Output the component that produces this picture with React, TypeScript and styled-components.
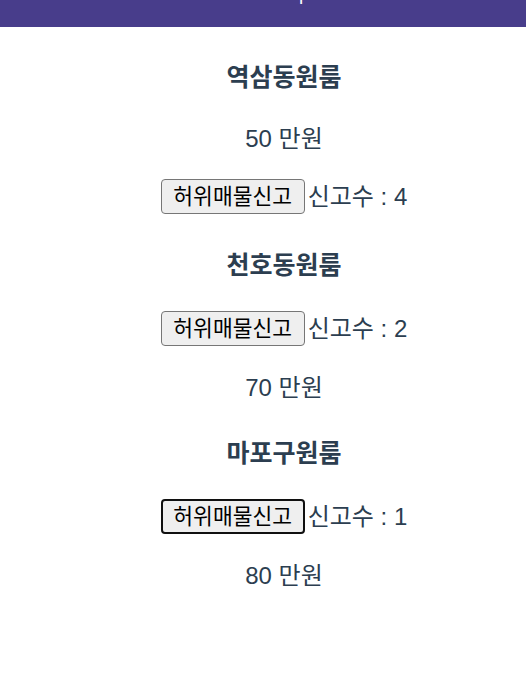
import React, { FC } from 'react';
import styled, { createGlobalStyle } from 'styled-components';

const GlobalStyle = createGlobalStyle`
    html, body {
        margin: 0;
        padding: 0;
        background: #ffffff;
    }
    body {
        font-family: 'Liberation Sans', Arial, 'Noto Sans CJK KR', sans-serif;
        -webkit-font-smoothing: antialiased;
        color: #2c3e50;
    }
`;

const Page = styled.div`
    display: flex;
    flex-direction: column;
`;

const Menu = styled.div`
    height: 27px;
    background: #483d8b;
    overflow: hidden;
    display: flex;
    justify-content: center;
    padding-left: 76px;
`;

const MenuText = styled.span`
    color: #ffffff;
    font-size: 20px;
    line-height: 20px;
    margin-top: -17px;
    height: 20px;
`;

const Content = styled.div`
    padding: 2px 0 0 42px;
    text-align: center;
`;

const Title = styled.h4<{ first?: boolean }>`
    font-size: 25px;
    font-weight: 700;
    line-height: 32px;
    margin: ${(props) => (props.first ? '32px' : '33px')} 0 30px;
`;

const Price = styled.p`
    font-size: 24px;
    line-height: 32px;
    margin: 24px 0;
`;

const ReportRow = styled.p`
    font-size: 24px;
    line-height: 37px;
    height: 37px;
    margin: 24px 0;
    display: flex;
    justify-content: center;
    align-items: flex-start;
`;

const ReportButton = styled.button<{ focused?: boolean }>`
    font-family: 'Liberation Sans', Arial, 'Noto Sans CJK KR', sans-serif;
    font-size: 21.5px;
    line-height: 26px;
    height: 35px;
    width: 144px;
    padding: 0 4px;
    color: #000000;
    background: #efefef;
    border: ${(props) => (props.focused ? '2px solid #101010' : '1px solid #767676')};
    border-radius: 4px;
    box-sizing: border-box;
    cursor: pointer;
`;

const ReportCount = styled.span`
    margin-left: 3px;
    line-height: 35px;
`;

type Room = {
    title: string;
    price: number;
    reports: number;
    priceFirst: boolean;
};

const rooms: Room[] = [
    { title: '역삼동원룸', price: 50, reports: 4, priceFirst: true },
    { title: '천호동원룸', price: 70, reports: 2, priceFirst: false },
    { title: '마포구원룸', price: 80, reports: 1, priceFirst: false },
];

const App: FC = () => {
    return (
        <Page>
            <GlobalStyle />
            <Menu>
                <MenuText>|</MenuText>
            </Menu>
            <Content>
                {rooms.map((room, i) => {
                    const price = <Price key="price">{room.price} 만원</Price>;
                    const report = (
                        <ReportRow key="report">
                            <ReportButton focused={i === 2}>허위매물신고</ReportButton>
                            <ReportCount>신고수 : {room.reports}</ReportCount>
                        </ReportRow>
                    );
                    return (
                        <div key={room.title}>
                            <Title first={i === 0}>{room.title}</Title>
                            {room.priceFirst ? [price, report] : [report, price]}
                        </div>
                    );
                })}
            </Content>
        </Page>
    );
};

export default App;
